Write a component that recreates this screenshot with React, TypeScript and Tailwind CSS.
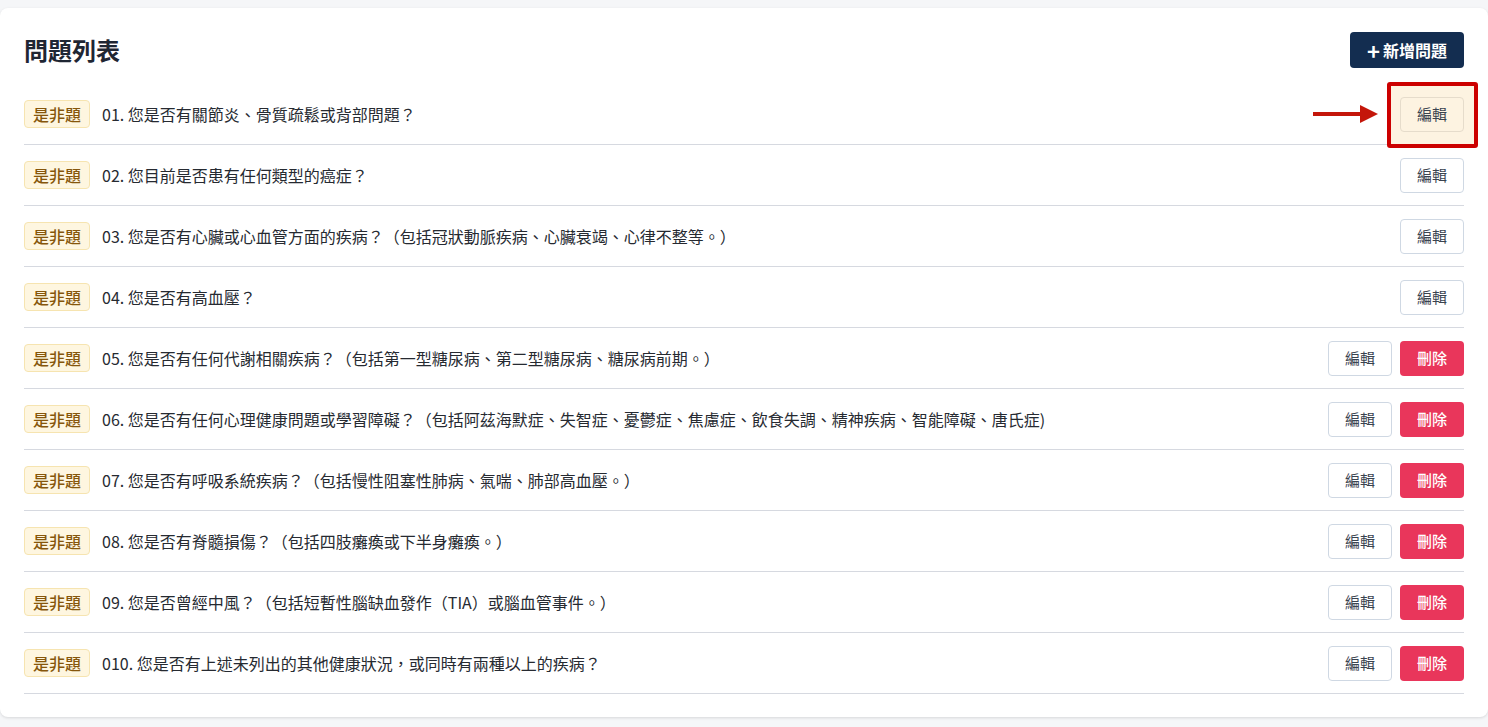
import React from "react";

type Question = {
  id: number;
  text: string;
  deletable: boolean;
};

const questions: Question[] = [
  { id: 1, text: "01. 您是否有關節炎、骨質疏鬆或背部問題？", deletable: false },
  { id: 2, text: "02. 您目前是否患有任何類型的癌症？", deletable: false },
  { id: 3, text: "03. 您是否有心臟或心血管方面的疾病？（包括冠狀動脈疾病、心臟衰竭、心律不整等。）", deletable: false },
  { id: 4, text: "04. 您是否有高血壓？", deletable: false },
  { id: 5, text: "05. 您是否有任何代謝相關疾病？（包括第一型糖尿病、第二型糖尿病、糖尿病前期。）", deletable: true },
  { id: 6, text: "06. 您是否有任何心理健康問題或學習障礙？（包括阿茲海默症、失智症、憂鬱症、焦慮症、飲食失調、精神疾病、智能障礙、唐氏症)", deletable: true },
  { id: 7, text: "07. 您是否有呼吸系統疾病？（包括慢性阻塞性肺病、氣喘、肺部高血壓。）", deletable: true },
  { id: 8, text: "08. 您是否有脊髓損傷？（包括四肢癱瘓或下半身癱瘓。）", deletable: true },
  { id: 9, text: "09. 您是否曾經中風？（包括短暫性腦缺血發作（TIA）或腦血管事件。）", deletable: true },
  { id: 10, text: "010. 您是否有上述未列出的其他健康狀況，或同時有兩種以上的疾病？", deletable: true },
];

const EditButton: React.FC<{ highlighted?: boolean }> = ({ highlighted }) => (
  <button
    className={`h-[35px] w-16 rounded border text-[15px] text-[#3a4350] ${
      highlighted ? "border-[#e6dccb] bg-[#fdf3e1]" : "border-[#cfd8e3] bg-white"
    }`}
  >
    編輯
  </button>
);

const QuestionList: React.FC = () => {
  return (
    <div
      className="min-h-[727px] bg-[#f5f6f8] pt-2 pb-2"
      style={{ fontFamily: '"Noto Sans CJK TC", "Noto Sans", sans-serif' }}
    >
      <div className="h-[709px] rounded-lg bg-white px-6 shadow-[0_1px_3px_rgba(0,0,0,0.12)]">
        <div className="flex items-center justify-between pt-6 pb-4">
          <h1 className="text-[24px] font-bold leading-9 text-[#1f2633]">問題列表</h1>
          <button className="flex h-9 w-[114px] items-center justify-center gap-[3px] rounded bg-[#132d50] text-[16px] font-bold text-white">
            <span className="text-[22px] font-bold leading-none">+</span>
            新增問題
          </button>
        </div>

        <ul>
          {questions.map((q) => (
            <li key={q.id} className="flex h-[61px] items-center border-b border-[#d6d9e0]">
              <span className="mr-3 flex h-7 w-[66px] items-center justify-center rounded border border-[#f6e4b0] bg-[#fef6e0] text-[16px] font-medium text-[#86560b]">
                是非題
              </span>
              <p className="flex-1 text-[16px] text-[#262a31]">{q.text}</p>
              <div className="flex items-center gap-2">
                {q.id === 1 ? (
                  <div className="relative flex items-center">
                    <div className="pointer-events-none absolute right-[86px] top-1/2 flex -translate-y-1/2 items-center">
                      <span className="h-1 w-[48px] bg-[#c4160a]" />
                      <svg width="18" height="18" viewBox="0 0 18 18" className="-ml-px">
                        <path d="M0 0 L18 9 L0 18 Z" fill="#c4160a" />
                      </svg>
                    </div>
                    <span className="absolute -top-[15px] -bottom-[16px] -left-[13px] -right-[14px] rounded-[3px] border-4 border-[#cc0000] bg-[#fdf3e1]" />
                    <div className="relative">
                      <EditButton highlighted />
                    </div>
                  </div>
                ) : (
                  <EditButton />
                )}
                {q.deletable && (
                  <button className="h-[35px] w-16 rounded bg-[#e9365b] text-[15px] font-medium text-white">
                    刪除
                  </button>
                )}
              </div>
            </li>
          ))}
        </ul>
      </div>
    </div>
  );
};

export default QuestionList;
